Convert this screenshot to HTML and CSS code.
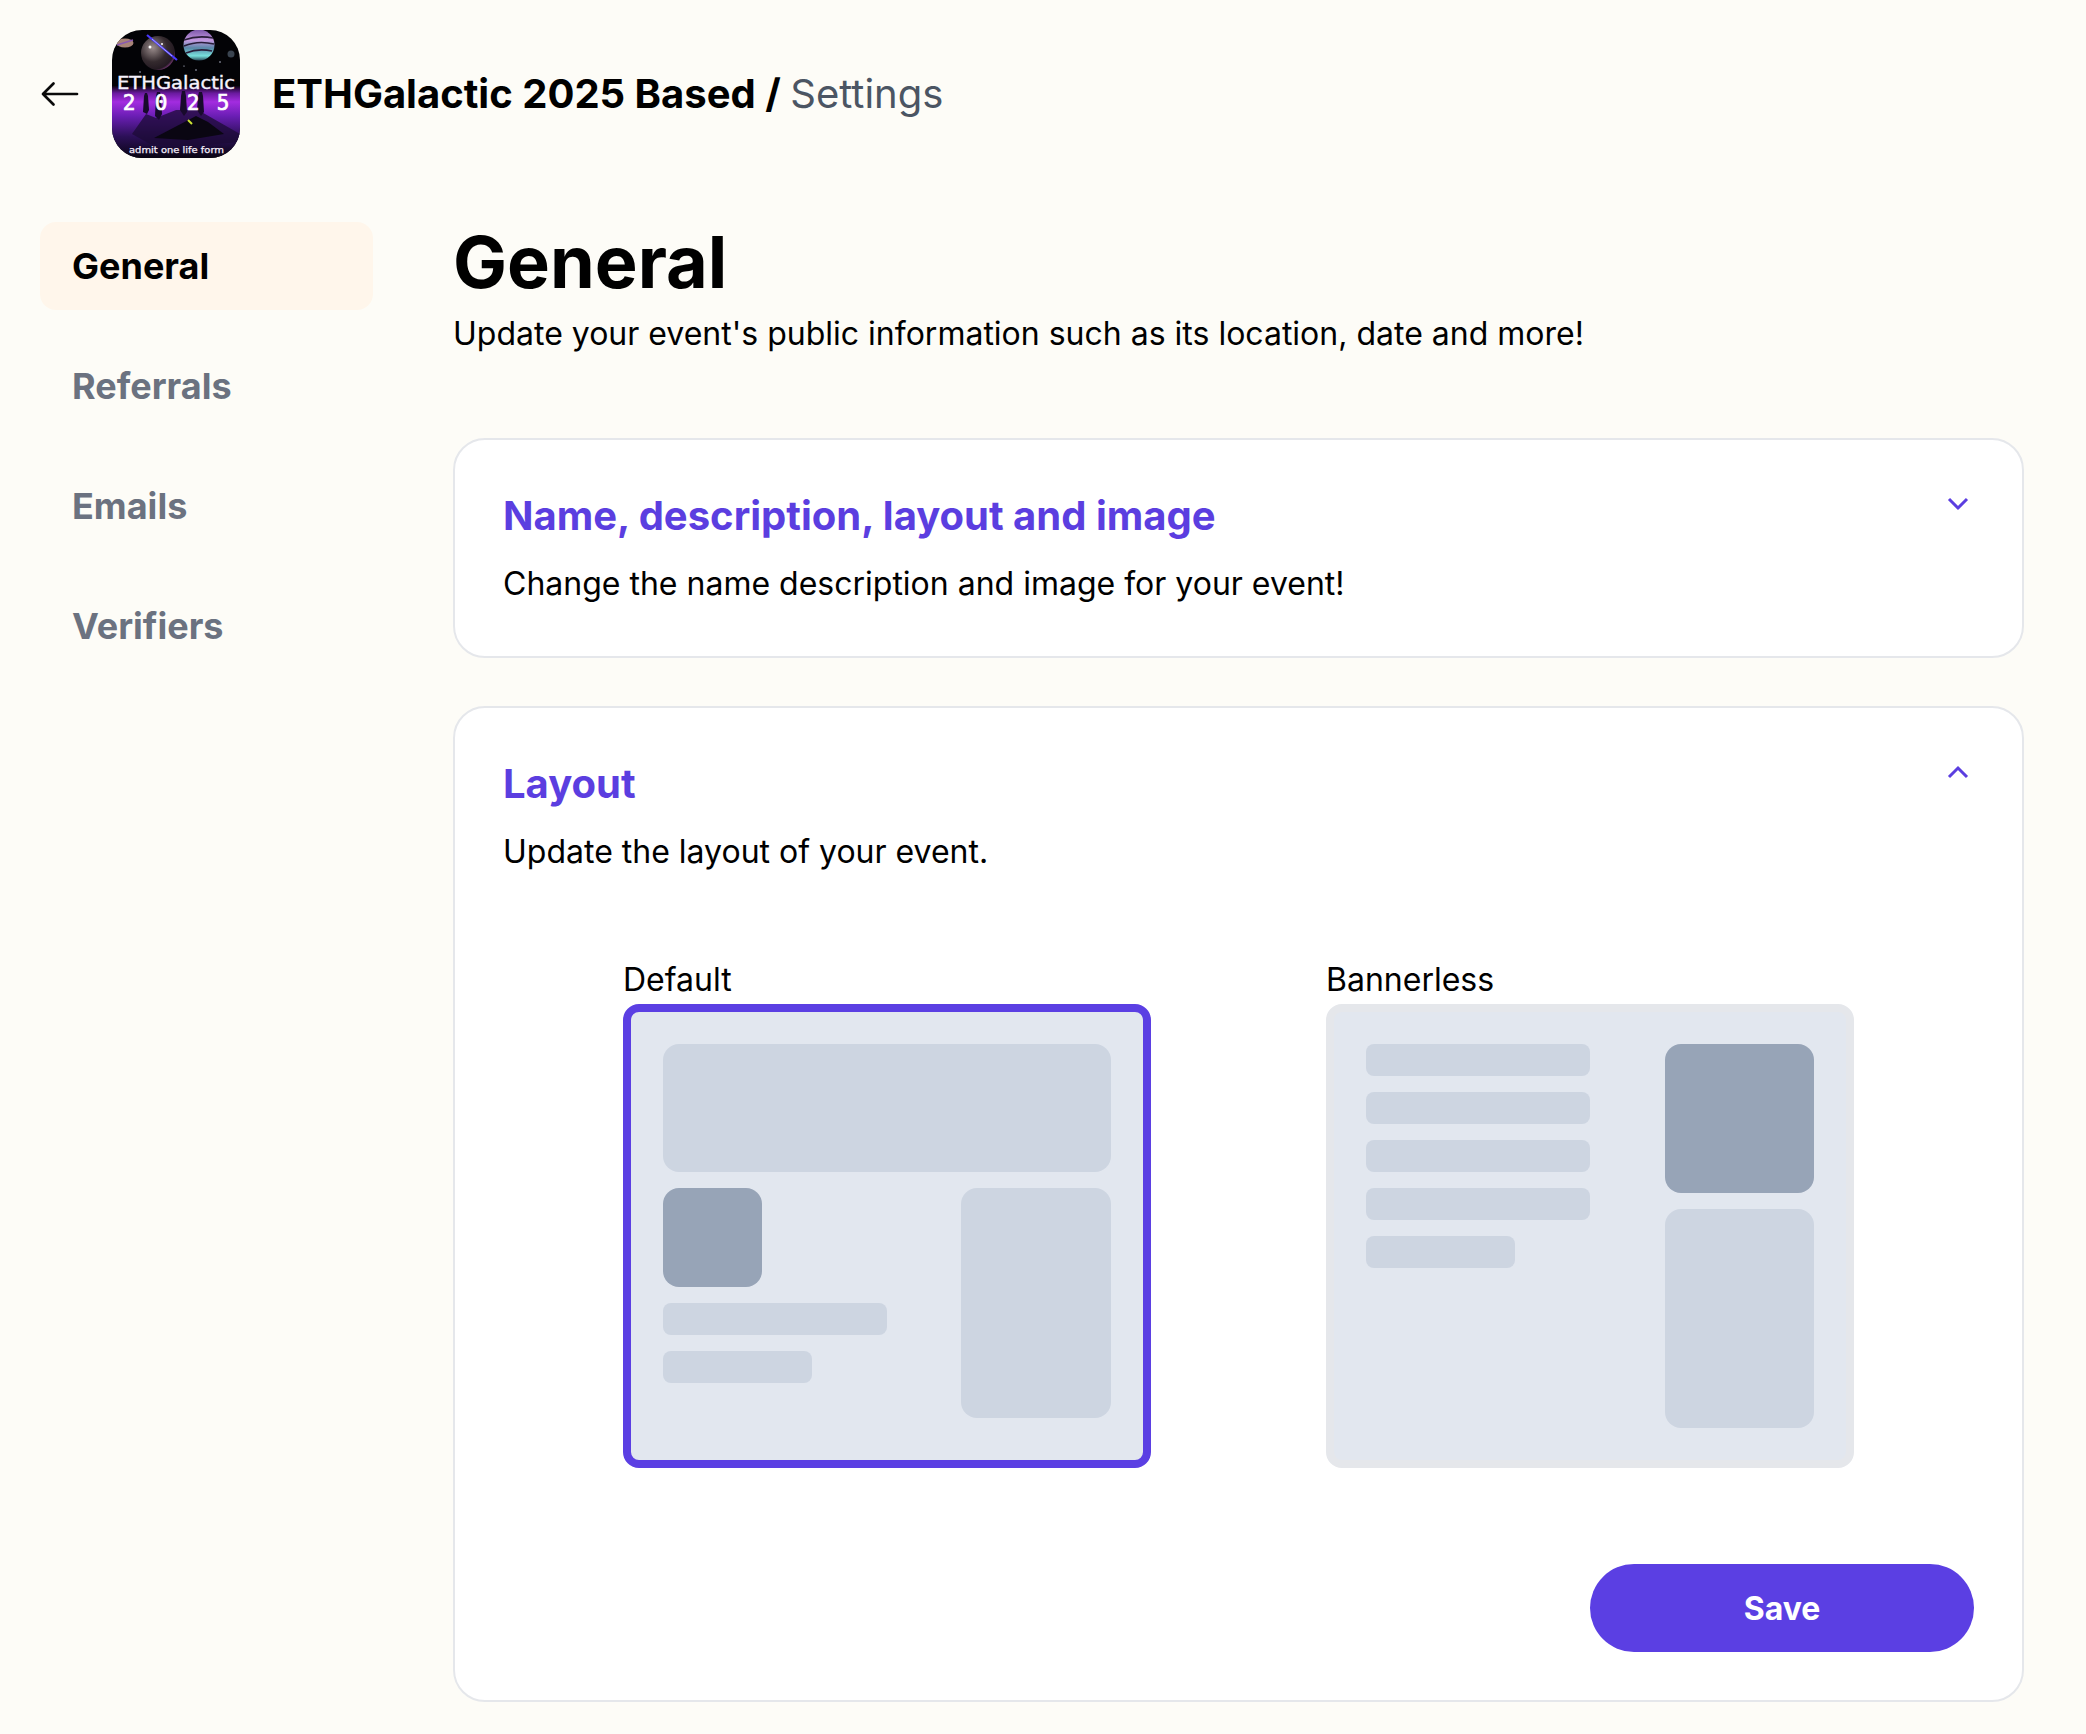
FILE: index.html
```html
<!DOCTYPE html>
<html lang="en">
<head>
  <meta charset="UTF-8">
  <meta name="viewport" content="width=device-width, initial-scale=1.0">
  <title>ETHGalactic 2025 Based / Settings</title>
  <link rel="stylesheet" href="styles.css">
</head>
<body>
  <header class="topbar">
    <a class="back" href="#" aria-label="Back">
      <svg width="40" height="44" viewBox="0 0 40 44" fill="none" stroke="#0a0a0a" stroke-width="2.7" stroke-linecap="round" stroke-linejoin="round"><path d="M37 22H3M13.500 11.500 3 22l10.500 10.500"/></svg>
    </a>
    <svg class="logo" viewBox="0 0 128 128" role="img" aria-label="ETHGalactic 2025">
      <defs>
        <clipPath id="round"><rect width="128" height="128" rx="30"/></clipPath>
        <linearGradient id="ground" x1="0" y1="0" x2="0" y2="1">
          <stop offset="0" stop-color="#0a0410"/>
          <stop offset=".1" stop-color="#6a1a9e"/>
          <stop offset=".22" stop-color="#a32ce0"/>
          <stop offset=".42" stop-color="#6a1eb4"/>
          <stop offset=".7" stop-color="#2c1058"/>
          <stop offset="1" stop-color="#090512"/>
        </linearGradient>
        <linearGradient id="stripes" x1="0" y1="0" x2="0" y2="1">
          <stop offset="0" stop-color="#7a55a8"/>
          <stop offset=".35" stop-color="#c49ae0"/>
          <stop offset=".6" stop-color="#5a88a8"/>
          <stop offset=".85" stop-color="#78e0dc"/>
          <stop offset="1" stop-color="#2a4a5a"/>
        </linearGradient>
        <radialGradient id="globe" cx=".35" cy=".35" r=".75">
          <stop offset="0" stop-color="#9a8c8c"/>
          <stop offset=".55" stop-color="#342a2e"/>
          <stop offset=".85" stop-color="#241a22"/>
          <stop offset="1" stop-color="#a04aa0"/>
        </radialGradient>
      </defs>
      <g clip-path="url(#round)">
        <rect width="128" height="128" fill="#030306"/>
        <rect y="56" width="128" height="72" fill="url(#ground)"/>
        <path d="M20 104 34 84l10 4 20-8 22 0 42 24v8l-50 4-40-2Z" fill="#1c0b36" opacity=".75"/>
        <path d="M42 108 84 86l12 6 16 12-36 6Z" fill="#0a0612"/>
        <path d="M76 90l4 4" stroke="#cfe635" stroke-width="2"/>
        <g fill="#180a2c">
          <path d="M31 82l1-16 1-3h2l1 3 1 14 -2 4Z"/>
          <path d="M43 86l1-20 1-4h3l1 4 1 18-3 6Z"/>
          <path d="M68 80l1-14 1-5h3l1 5 1 16-3 4Z"/>
          <path d="M85 80l1-14 1-4h3l1 4 1 16-3 4Z"/>
        </g>
        <ellipse cx="13" cy="13" rx="8.500" ry="4.500" fill="#a88478"/>
        <path d="M5 15l16-5" stroke="#8a5ab0" stroke-width="1.400"/>
        <circle cx="46" cy="23" r="17" fill="url(#globe)"/>
        <circle cx="38" cy="17" r="1.500" fill="#fff"/>
        <circle cx="50" cy="14" r="1" fill="#fff"/>
        <path d="M35 5 65 30" stroke="#4a38ff" stroke-width="2.200"/>
        <path d="M40 9 60 26" stroke="#c8c4ff" stroke-width=".8"/>
        <circle cx="87" cy="15" r="15.500" fill="url(#stripes)"/>
        <path d="M72 10q14-5 29-2M72 16q14-6 30-2M74 23q12-5 26-2" stroke="#2a1e3a" stroke-width="1.500" fill="none"/>
        <circle cx="119" cy="24" r="3.500" fill="#3a4450"/>
        <g fill="#dfe6ff">
          <circle cx="28" cy="42" r=".7"/>
          <circle cx="84" cy="40" r=".7"/>
          <circle cx="108" cy="32" r=".7"/>
          <circle cx="72" cy="36" r=".6"/>
        </g>
        <text class="logo-name" x="5" y="59" textLength="118" lengthAdjust="spacingAndGlyphs">ETHGalactic</text>
        <text class="logo-year" x="17" y="80" text-anchor="middle">2</text>
        <text class="logo-year" x="49" y="80" text-anchor="middle">0</text>
        <text class="logo-year" x="81" y="80" text-anchor="middle">2</text>
        <text class="logo-year" x="111" y="80" text-anchor="middle">5</text>
        <text class="logo-foot" x="17" y="123" textLength="95" lengthAdjust="spacingAndGlyphs">admit one life form</text>
      </g>
    </svg>
    <h1 class="crumb">ETHGalactic 2025 Based / <span class="crumb-page">Settings</span></h1>
  </header>

  <div class="layout">
    <nav class="sidenav">
      <a class="nav-item active" href="#">General</a>
      <a class="nav-item" href="#">Referrals</a>
      <a class="nav-item" href="#">Emails</a>
      <a class="nav-item" href="#">Verifiers</a>
    </nav>

    <main class="content">
      <h2 class="page-title">General</h2>
      <p class="page-sub">Update your event's public information such as its location, date and more!</p>

      <section class="card">
        <div class="card-head">
          <div>
            <h3 class="card-title">Name, description, layout and image</h3>
            <p class="card-sub">Change the name description and image for your event!</p>
          </div>
          <svg class="chev" width="24" height="24" viewBox="0 0 24 24" fill="none" stroke="#5b3ee0" stroke-width="3"><path d="M3 7l9 9 9-9"/></svg>
        </div>
      </section>

      <section class="card">
        <div class="card-head">
          <div>
            <h3 class="card-title">Layout</h3>
            <p class="card-sub">Update the layout of your event.</p>
          </div>
          <svg class="chev" width="24" height="24" viewBox="0 0 24 24" fill="none" stroke="#5b3ee0" stroke-width="3"><path d="M3 17l9-9 9 9"/></svg>
        </div>

        <div class="layout-options">
          <div class="option">
            <div class="option-label">Default</div>
            <div class="preview selected">
              <div class="block banner"></div>
              <div class="default-row">
                <div class="default-left">
                  <div class="block dark avatar"></div>
                  <div class="block line"></div>
                  <div class="block line short"></div>
                </div>
                <div class="block side"></div>
              </div>
            </div>
          </div>

          <div class="option">
            <div class="option-label">Bannerless</div>
            <div class="preview bannerless">
              <div class="lines">
                <div class="block line"></div>
                <div class="block line"></div>
                <div class="block line"></div>
                <div class="block line"></div>
                <div class="block line short"></div>
              </div>
              <div class="right-col">
                <div class="block dark cover"></div>
                <div class="block panel"></div>
              </div>
            </div>
          </div>
        </div>

        <div class="card-foot">
          <button class="save" type="button">Save</button>
        </div>
      </section>
    </main>
  </div>
</body>
</html>
```

FILE: styles.css
```css
* {
  box-sizing: border-box;
}
body {
  margin: 0;
  min-height: 100vh;
  background-color: #fdfcf7;
  color: #000;
  font-family: Inter, "Liberation Sans", sans-serif;
}
h1, h2, h3, p {
  margin: 0;
}
a {
  text-decoration: none;
  color: inherit;
}

/* top bar */
.topbar {
  display: flex;
  align-items: center;
  padding: 30px 40px 0 40px;
}
.back {
  display: flex;
  width: 72px;
}
.logo {
  width: 128px;
  height: 128px;
  flex: none;
}
.logo-name {
  font: 400 18px "DejaVu Sans", sans-serif;
  fill: #f6f2fc;
  stroke: #f6f2fc;
  stroke-width: .4px;
}
.logo-year {
  font: 400 21px "DejaVu Sans Mono", monospace;
  fill: #fff;
  stroke: #fff;
  stroke-width: .7px;
}
.logo-foot {
  font: 400 9px "DejaVu Sans", sans-serif;
  fill: #f4eefa;
  stroke: #f4eefa;
  stroke-width: .25px;
}
.crumb {
  margin-left: 32px;
  font-size: 40px;
  font-weight: 700;
  line-height: 48px;
}
.crumb-page {
  font-weight: 400;
  color: #4b5563;
}

/* page */
.layout {
  display: flex;
  padding: 64px 62px 0 40px;
}
.sidenav {
  width: 333px;
  flex: none;
  display: flex;
  flex-direction: column;
  gap: 32px;
}
.nav-item {
  height: 88px;
  padding: 0 32px;
  display: flex;
  align-items: center;
  border-radius: 16px;
  font-size: 36px;
  font-weight: 700;
  color: #6b7280;
}
.nav-item.active {
  background-color: #fff6eb;
  color: #000;
}
.content {
  flex: 1;
  margin-left: 80px;
}
.page-title {
  font-size: 72px;
  font-weight: 700;
  line-height: 80px;
}
.page-sub {
  margin-top: 8px;
  font-size: 32px;
  line-height: 48px;
}

.card {
  margin-top: 48px;
  padding: 52px 48px 48px 48px;
  background-color: #fff;
  border: 2px solid #e5e7eb;
  border-radius: 32px;
}
.page-sub + .card {
  margin-top: 80px;
}
.card-head {
  display: flex;
  justify-content: space-between;
  align-items: flex-start;
}
.chev {
  margin-right: 4px;
}
.card-title {
  font-size: 40px;
  font-weight: 700;
  line-height: 48px;
  color: #5b3ee0;
}
.card-sub {
  margin-top: 20px;
  font-size: 32px;
  line-height: 48px;
}

/* layout chooser */
.layout-options {
  display: flex;
  justify-content: center;
  gap: 175px;
  margin-top: 84px;
}
.option-label {
  margin-bottom: 4px;
  font-size: 32px;
  line-height: 40px;
}
.preview {
  width: 528px;
  height: 464px;
  padding: 32px;
  background-color: #e2e7ef;
  border: 8px solid #e5e7eb;
  border-radius: 16px;
}
.preview.selected {
  border-color: #5b3fe3;
}
.block {
  background-color: #cdd5e1;
  border-radius: 16px;
}
.block.dark {
  background-color: #97a4b7;
}
.block.banner {
  height: 128px;
}
.default-row {
  display: flex;
  justify-content: space-between;
  margin-top: 16px;
}
.default-left {
  display: flex;
  flex-direction: column;
  gap: 16px;
}
.avatar {
  width: 99px;
  height: 99px;
}
.line {
  width: 224px;
  height: 32px;
  border-radius: 8px;
}
.line.short {
  width: 149px;
}
.side {
  width: 150px;
  height: 230px;
}
.bannerless {
  display: flex;
  justify-content: space-between;
}
.lines {
  display: flex;
  flex-direction: column;
  gap: 16px;
}
.right-col {
  display: flex;
  flex-direction: column;
  gap: 16px;
  width: 149px;
}
.cover {
  height: 149px;
}
.panel {
  height: 219px;
}

.card-foot {
  display: flex;
  justify-content: flex-end;
  margin-top: 96px;
}
.save {
  width: 384px;
  height: 88px;
  border: none;
  border-radius: 44px;
  background-color: #5b3fe3;
  color: #fff;
  font-family: inherit;
  font-size: 32px;
  font-weight: 700;
  cursor: pointer;
}
```
